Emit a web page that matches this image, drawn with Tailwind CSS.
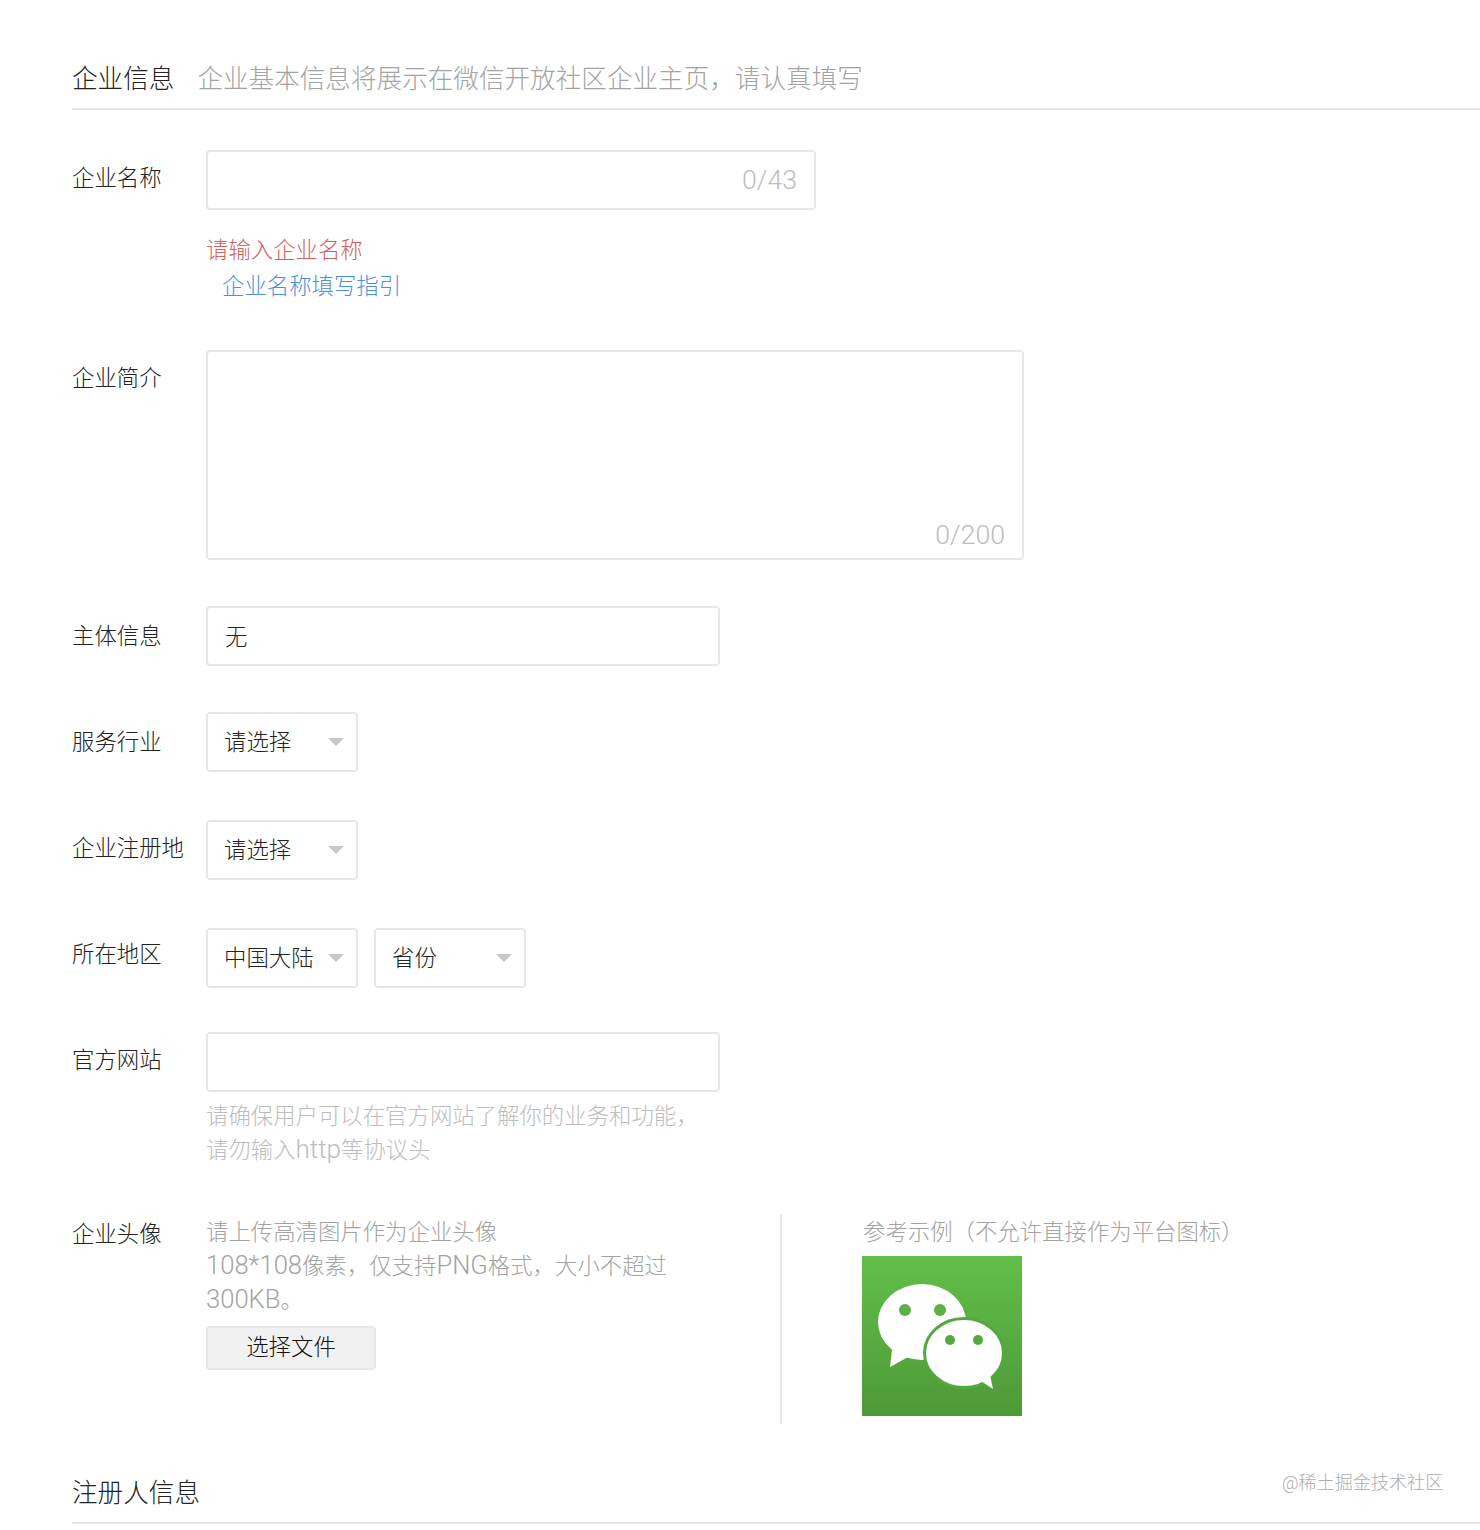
<!DOCTYPE html>
<html lang="zh-CN">
<head>
  <meta charset="UTF-8">
  <title>企业信息</title>
  <script src="https://cdn.jsdelivr.net/npm/@tailwindcss/browser@4"></script>
</head>
<body class="bg-white h-[1530px] overflow-hidden relative font-['Roboto','Noto_Sans_CJK_SC',sans-serif] font-light text-[22.4px] text-[#222]">

  <!-- Watermark -->
  <div class="absolute left-[1282px] top-[1470px] text-[18.1px] leading-[26px] text-[#adadad]">@稀土掘金技术社区</div>

  <div class="pl-[72px]">
    <!-- Company section header -->
    <div class="h-[110px] pt-[61px] border-b-2 border-[#e7e7eb] flex items-start">
      <h2 class="text-[25.6px] leading-[36px] font-light">企业信息</h2>
      <p class="ml-[23px] text-[25.6px] leading-[36px] text-[#a3a3a3]">企业基本信息将展示在微信开放社区企业主页，请认真填写</p>
    </div>

    <!-- Name -->
    <div class="flex mt-[40px]">
      <label class="w-[134px] pt-[11px] leading-[34px]">企业名称</label>
      <div>
        <div class="w-[610px] h-[60px] border-2 border-[#e7e7eb] rounded-[4px] flex items-center justify-end pr-[17px] text-[#bdbdbd] text-[26.7px]">0/43</div>
        <div class="mt-[22px] leading-[36px] text-[#d4605c]">请输入企业名称</div>
        <a class="block leading-[36px] text-[#4a90e2] pl-[16px]">企业名称填写指引</a>
      </div>
    </div>

    <!-- Intro -->
    <div class="flex mt-[46px]">
      <label class="w-[134px] pt-[11px] leading-[34px]">企业简介</label>
      <div class="w-[818px] h-[210px] border-2 border-[#e7e7eb] rounded-[4px] flex items-end justify-end pr-[17px] pb-[3px] text-[#bdbdbd] text-[26.7px]">0/200</div>
    </div>

    <!-- Subject -->
    <div class="flex mt-[46px]">
      <label class="w-[134px] pt-[13px] leading-[34px]">主体信息</label>
      <div class="w-[514px] h-[60px] border-2 border-[#e7e7eb] rounded-[4px] flex items-center pl-[17px] pt-[4px]">无</div>
    </div>

    <!-- Industry -->
    <div class="flex mt-[46px]">
      <label class="w-[134px] pt-[13px] leading-[34px]">服务行业</label>
      <div class="w-[152px] h-[60px] border-2 border-[#e7e7eb] rounded-[4px] flex items-center justify-between pl-[16px] pr-[12px]">
        <span class="pt-[2px]">请选择</span>
        <svg class="w-[16px] h-[8px]" viewBox="0 0 16 8"><polygon points="0,0 16,0 8,8" fill="#c8c8c8"/></svg>
      </div>
    </div>

    <!-- Registered place -->
    <div class="flex mt-[48px]">
      <label class="w-[134px] pt-[11px] leading-[34px]">企业注册地</label>
      <div class="w-[152px] h-[60px] border-2 border-[#e7e7eb] rounded-[4px] flex items-center justify-between pl-[16px] pr-[12px]">
        <span class="pt-[2px]">请选择</span>
        <svg class="w-[16px] h-[8px]" viewBox="0 0 16 8"><polygon points="0,0 16,0 8,8" fill="#c8c8c8"/></svg>
      </div>
    </div>

    <!-- Region -->
    <div class="flex mt-[48px]">
      <label class="w-[134px] pt-[9px] leading-[34px]">所在地区</label>
      <div class="w-[152px] h-[60px] border-2 border-[#e7e7eb] rounded-[4px] flex items-center justify-between pl-[16px] pr-[12px]">
        <span class="pt-[2px]">中国大陆</span>
        <svg class="w-[16px] h-[8px]" viewBox="0 0 16 8"><polygon points="0,0 16,0 8,8" fill="#c8c8c8"/></svg>
      </div>
      <div class="ml-[16px] w-[152px] h-[60px] border-2 border-[#e7e7eb] rounded-[4px] flex items-center justify-between pl-[16px] pr-[12px]">
        <span class="pt-[2px]">省份</span>
        <svg class="w-[16px] h-[8px]" viewBox="0 0 16 8"><polygon points="0,0 16,0 8,8" fill="#c8c8c8"/></svg>
      </div>
    </div>

    <!-- Website -->
    <div class="flex mt-[44px]">
      <label class="w-[134px] pt-[11px] leading-[34px]">官方网站</label>
      <div>
        <div class="w-[514px] h-[60px] border-2 border-[#e7e7eb] rounded-[4px]"></div>
        <p class="mt-[7px] leading-[34px] text-[#bdbdbd]">请确保用户可以在官方网站了解你的业务和功能，<br>请勿输入<span class="text-[26px] leading-none">http</span>等协议头</p>
      </div>
    </div>

    <!-- Avatar -->
    <div class="flex mt-[47px] h-[210px]">
      <label class="w-[134px] pt-[3px] leading-[34px]">企业头像</label>
      <div class="w-[576px] border-r-2 border-[#e7e7eb]">
        <p class="w-[470px] pt-px leading-[34px] text-[#a3a3a3]">请上传高清图片作为企业头像<br><span class="text-[25.6px] leading-none">108*108</span>像素，仅支持<span class="text-[25.6px] leading-none">PNG</span>格式，大小不超过<span class="text-[25.6px] leading-none">300KB</span>。</p>
        <button class="mt-[9px] w-[170px] h-[44px] bg-[#f1f1f1] border-2 border-[#e7e7eb] rounded-[4px] font-light text-[#111]">选择文件</button>
      </div>
      <div class="pl-[80px]">
        <p class="pt-px leading-[34px] text-[#a3a3a3] pl-px">参考示例（不允许直接作为平台图标）</p>
        <div class="mt-[7px] w-[160px] h-[160px] bg-linear-to-b from-[#62bf4a] to-[#4e9937]">
          <svg class="w-[160px] h-[160px]" viewBox="0 0 160 160">
            <ellipse cx="60" cy="66" rx="44" ry="38" fill="#fff"/>
            <polygon points="30,94 28,111 46,101" fill="#fff"/>
            <ellipse cx="102" cy="97" rx="39.5" ry="34.5" fill="#fff" stroke="#55a83f" stroke-width="3"/>
            <polygon points="119,125 131,133 128,119" fill="#fff"/>
            <circle cx="43" cy="54" r="6" fill="#5bb145"/>
            <circle cx="78" cy="54" r="6" fill="#5bb145"/>
            <circle cx="88" cy="84" r="5" fill="#55a83f"/>
            <circle cx="116" cy="84" r="5" fill="#55a83f"/>
          </svg>
        </div>
      </div>
    </div>

    <!-- Registrant section header -->
    <div class="mt-[48px] h-[52px] pt-[3px] border-b-2 border-[#e7e7eb]">
      <h2 class="text-[25.6px] leading-[36px] font-light">注册人信息</h2>
    </div>
  </div>
</body>
</html>
